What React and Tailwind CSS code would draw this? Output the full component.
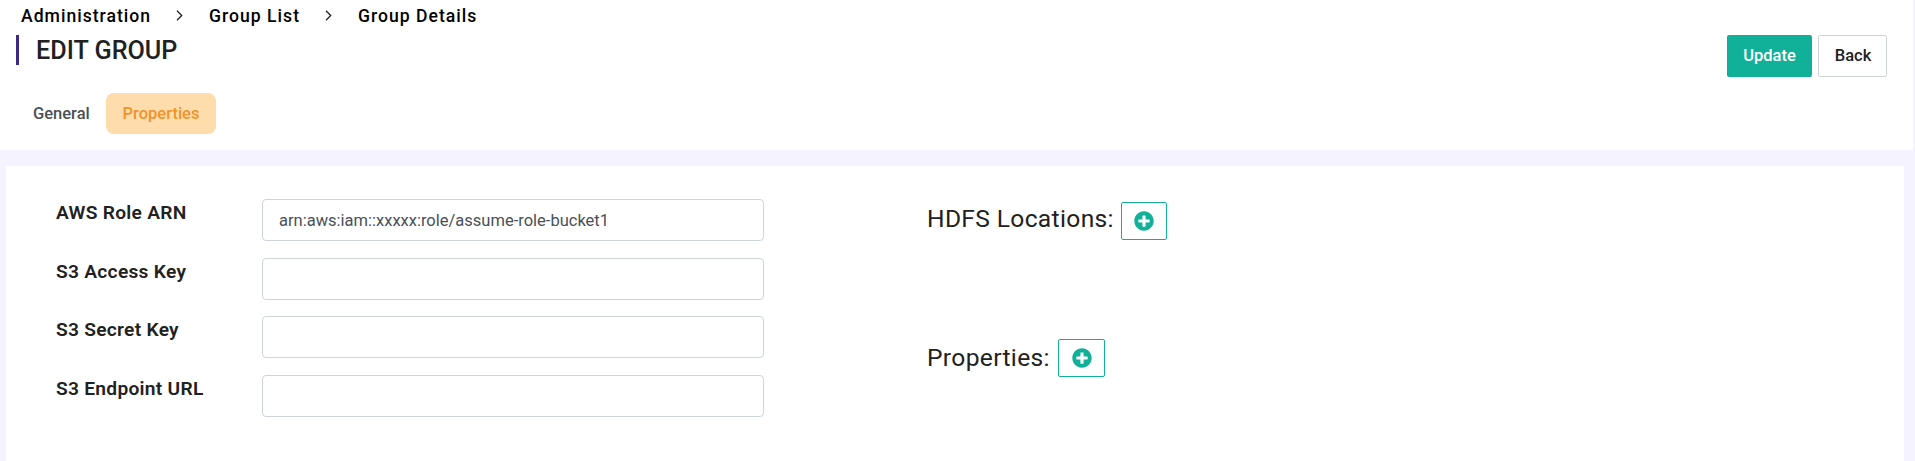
import { FaPlusCircle } from "react-icons/fa";

const crumbs = ["Administration", "Group List", "Group Details"];

const fields = [
  { label: "AWS Role ARN", value: "arn:aws:iam::xxxxx:role/assume-role-bucket1", gap: "h-[59px]" },
  { label: "S3 Access Key", value: "", gap: "h-[58px]" },
  { label: "S3 Secret Key", value: "", gap: "h-[59px]" },
  { label: "S3 Endpoint URL", value: "", gap: "h-[42px]" },
];

function Chevron() {
  return (
    <svg className="mr-[26px] ml-[25px] h-[11px] w-[7px]" viewBox="0 0 7 11" fill="none" stroke="#222" strokeWidth="1.3">
      <path d="M1 0.8 L5.7 5.5 L1 10.2" />
    </svg>
  );
}

function AddButton({ className }) {
  return (
    <button className={`flex h-[38px] items-center justify-center rounded-[2px] border border-[#10b198] text-[#10b198] ${className}`}>
      <FaPlusCircle className="size-5" />
    </button>
  );
}

export default function App() {
  return (
    <div className="h-[461px] overflow-hidden bg-[#f5f3ff] font-[Roboto,sans-serif] text-[#212121]">
      <header className="mr-[2px] flex h-[150px] justify-between bg-white">
        <div>
          <nav className="flex h-8 items-center pl-[21px] text-[17.6px] font-medium tracking-[1px] text-black">
            {crumbs.map((crumb, i) => (
              <span key={crumb} className="flex items-center whitespace-nowrap">
                {i > 0 && <Chevron />}
                {crumb}
              </span>
            ))}
          </nav>
          <h1 className="mt-[3px] ml-4 flex h-[30px] items-center border-l-[3px] border-[#3f2986] pt-0.5 pl-[17px] text-[25.2px] font-medium">
            EDIT GROUP
          </h1>
          <div className="mt-7 ml-4 flex h-[41px] text-[16.5px] font-medium">
            <button className="w-[90px] pt-0.5 pl-[17px] text-left text-[#495057]">General</button>
            <button className="w-[110px] rounded-lg bg-[#ffdcab] pt-0.5 text-[#f0932b]">Properties</button>
          </div>
        </div>
        <div className="mt-[35px] mr-[26px] flex h-[42px] gap-1.5 text-[16.5px] font-medium">
          <button className="w-[85px] rounded-[2px] bg-[#10b198] text-white">Update</button>
          <button className="w-[69px] rounded-[2px] border border-[#ced4da] pl-px">Back</button>
        </div>
      </header>

      <main className="mt-4 mr-[11px] ml-1.5 flex h-[295px] bg-white pt-[33px]">
        <form className="w-[920px] pl-[50px]">
          {fields.map((f) => (
            <div key={f.label} className={`flex ${f.gap}`}>
              <label className="w-[206px] text-[19.2px] leading-[27px] font-semibold tracking-[0.27px]">{f.label}</label>
              <input
                className="h-[42px] w-[502px] rounded border border-[#ced4da] bg-white px-4 text-[16.5px] text-[#495057] outline-none"
                defaultValue={f.value}
              />
            </div>
          ))}
        </form>
        <section className="pt-[3px] text-[24.6px] tracking-[0.34px]">
          <div className="flex h-[137px] items-start">
            <h2 className="w-[195px] pl-px leading-[34px]">HDFS Locations:</h2>
            <AddButton className="w-[46px]" />
          </div>
          <div className="flex items-start">
            <h2 className="w-[132px] pl-px leading-[38px]">Properties:</h2>
            <AddButton className="w-[47px]" />
          </div>
        </section>
      </main>
    </div>
  );
}
